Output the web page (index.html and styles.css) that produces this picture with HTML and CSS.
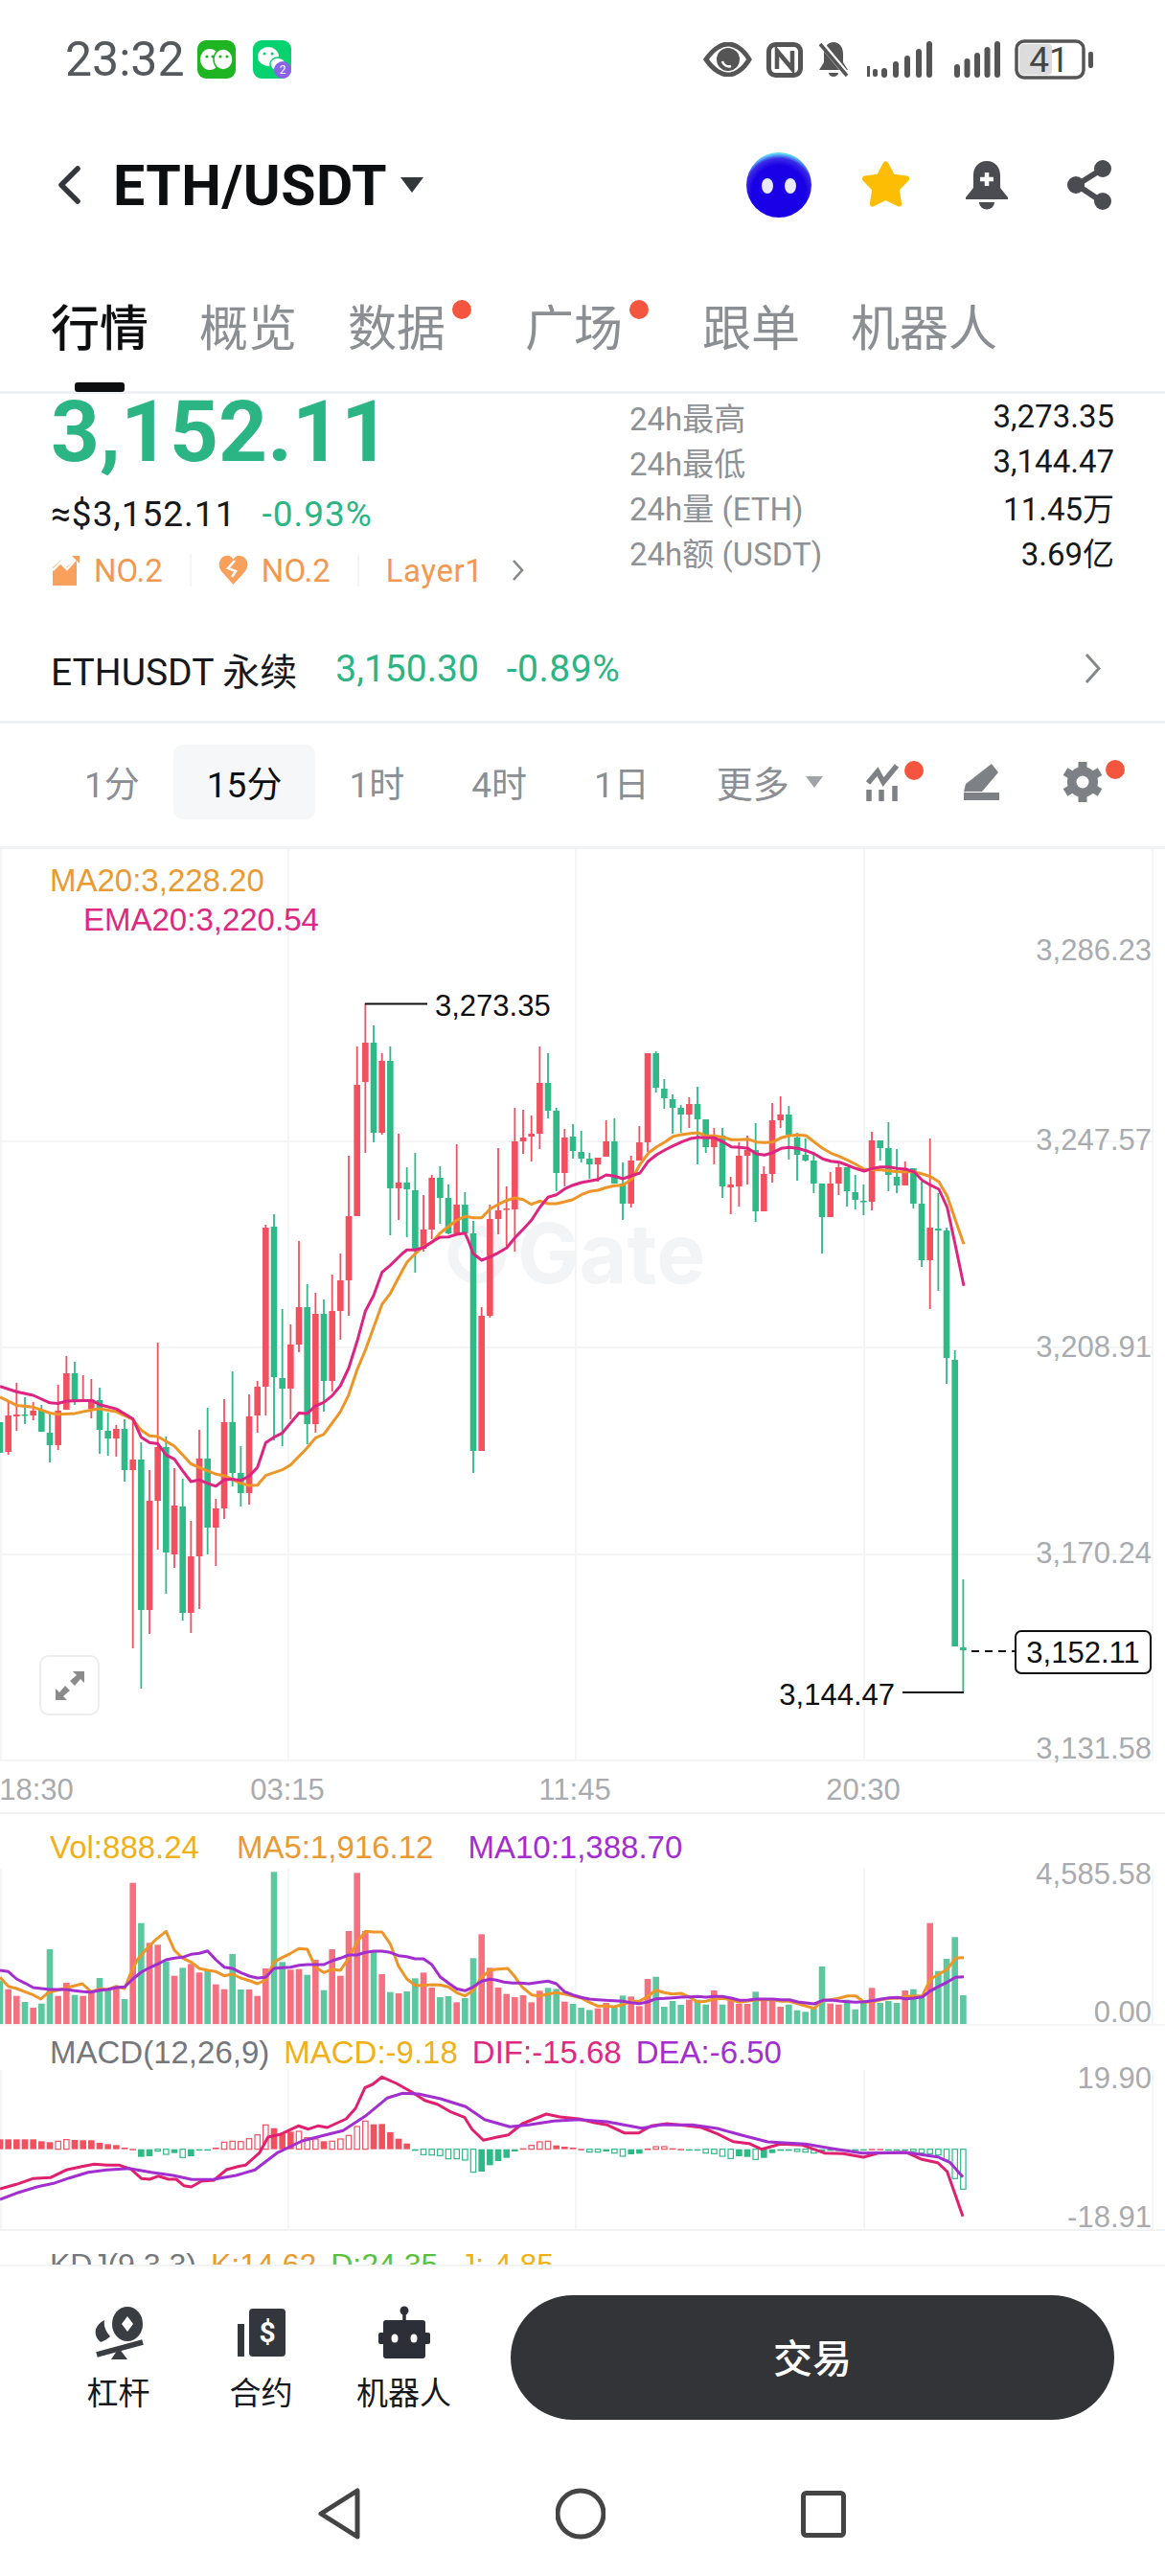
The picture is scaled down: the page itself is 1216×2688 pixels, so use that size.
FILE: index.html
```html
<!DOCTYPE html>
<html lang="zh">
<head>
    <meta charset="UTF-8">
    <meta name="viewport" content="width=device-width, initial-scale=1.0">
    <title>ETH/USDT</title>
    <link rel="stylesheet" href="styles.css">
</head>
<body>
    <div class="status-bar">
        <span class="clock">23:32</span>
        <svg class="app-icon" width="40" height="40" viewBox="0 0 40 40">
            <rect width="40" height="40" rx="9" fill="#1fb522"/>
            <ellipse cx="13" cy="20" rx="10" ry="11" fill="#fff"/>
            <ellipse cx="27" cy="20" rx="10" ry="11" fill="#fff" stroke="#1fb522" stroke-width="1.5"/>
            <circle cx="10" cy="17" r="1.6" fill="#1fb522"/><circle cx="16" cy="17" r="1.6" fill="#1fb522"/>
            <circle cx="24" cy="17" r="1.6" fill="#1fb522"/><circle cx="31" cy="17" r="1.6" fill="#1fb522"/>
        </svg>
        <svg class="app-icon" width="40" height="40" viewBox="0 0 40 40">
            <rect width="40" height="40" rx="9" fill="#06d36f"/>
            <ellipse cx="16" cy="17" rx="11" ry="10" fill="#fff"/>
            <ellipse cx="26" cy="25" rx="8" ry="7" fill="#fff" stroke="#06d36f" stroke-width="1.5"/>
            <circle cx="12" cy="14" r="1.5" fill="#06d36f"/><circle cx="20" cy="14" r="1.5" fill="#06d36f"/>
            <circle cx="31" cy="31" r="9" fill="#8a63e8"/>
            <text x="31" y="35" class="badge-num">2</text>
        </svg>
        <div class="status-right">
            <svg width="51" height="36" viewBox="0 0 51 36">
                <path d="M3 18C11 6 20 2 26 2s15 4 22 16c-7 12-16 16-22 16S11 30 3 18z" fill="none" stroke="#555" stroke-width="5"/>
                <circle cx="26" cy="18" r="12" fill="#555"/>
                <path d="M20 20a7 7 0 0 0 9 5" fill="none" stroke="#fff" stroke-width="2.5"/>
            </svg>
            <svg width="38" height="37" viewBox="0 0 38 37">
                <rect x="2.500" y="2.500" width="33" height="32" rx="7" fill="none" stroke="#555" stroke-width="5"/>
                <path d="M11 28V9l16 19V9" fill="none" stroke="#555" stroke-width="4.500"/>
            </svg>
            <svg class="mute-bell" width="35" height="38" viewBox="0 0 35 38">
                <path d="M17 1c-6 0-10 5-10 12v9l-5 8h30l-5-8v-9c0-7-4-12-10-12z" fill="#555"/>
                <path d="M12 33a5 4 0 0 0 10 0z" fill="#555"/>
                <path d="M3 1l29 35" stroke="#fff" stroke-width="6"/>
                <path d="M3 3l28 33" stroke="#555" stroke-width="3.5"/>
            </svg>
            <svg width="69" height="38" viewBox="0 0 69 38">
                <rect x="1" y="26" width="3" height="11" fill="#555"/><rect x="7" y="29" width="5" height="8" rx="2" fill="#555"/>
                <rect x="16" y="28" width="6" height="10" rx="3" fill="#555"/><rect x="28" y="21" width="6" height="17" rx="3" fill="#555"/>
                <rect x="40" y="15" width="6" height="23" rx="3" fill="#555"/><rect x="52" y="8" width="6" height="30" rx="3" fill="#555"/>
                <rect x="63" y="0" width="6" height="38" rx="3" fill="#555"/>
            </svg>
            <svg class="signal-b" width="48" height="38" viewBox="0 0 48 38">
                <rect x="0" y="24" width="6" height="14" rx="3" fill="#555"/><rect x="10.5" y="18" width="6" height="20" rx="3" fill="#555"/>
                <rect x="21" y="12" width="6" height="26" rx="3" fill="#555"/><rect x="31.5" y="6" width="6" height="32" rx="3" fill="#555"/>
                <rect x="42" y="0" width="6" height="38" rx="3" fill="#555"/>
            </svg>
            <svg width="82" height="42" viewBox="0 0 82 42">
                <rect x="5" y="5" width="34" height="32" rx="4" fill="#dcdcdc"/>
                <rect x="2" y="2" width="70" height="38" rx="8" fill="none" stroke="#555" stroke-width="3.5"/>
                <rect x="77" y="13" width="5" height="17" rx="2" fill="#555"/>
                <text x="36" y="34" class="battery-num">41</text>
            </svg>
        </div>
    </div>

    <div class="head">
        <svg class="back" width="25" height="40" viewBox="0 0 25 40">
            <path d="M22 3L5 20l17 17" fill="none" stroke="#33363b" stroke-width="5.5" stroke-linecap="round" stroke-linejoin="round"/>
        </svg>
        <span class="pair">ETH/USDT</span>
        <span class="pair-caret"></span>
        <div class="head-icons">
            <svg class="mascot" width="68" height="70" viewBox="0 0 68 70">
                <defs>
                    <radialGradient id="blob" cx="50%" cy="62%" r="60%">
                        <stop offset="70%" stop-color="#1a00e6"/><stop offset="88%" stop-color="#3b2be8"/><stop offset="100%" stop-color="#5fd4f5"/>
                    </radialGradient>
                </defs>
                <circle cx="34" cy="35" r="34" fill="url(#blob)"/>
                <ellipse cx="22" cy="36" rx="6" ry="8" fill="#e8e8ff"/><ellipse cx="46" cy="36" rx="6" ry="8" fill="#e8e8ff"/>
            </svg>
            <svg class="fav" width="55" height="52" viewBox="0 0 56 52">
                <polygon points="28,4 35,17.3 50,19.3 39.4,30.7 42,46 28,39 14,46 16.6,30.7 6,19.3 21,17.3" fill="#fcbd04" stroke="#fcbd04" stroke-width="6" stroke-linejoin="round"/>
            </svg>
            <svg class="alert" width="48" height="52" viewBox="0 0 48 52">
                <path d="M24 1C15 1 10 8 10 16v13L2 39v2h44v-2l-8-10V16C38 8 33 1 24 1z" fill="#4a4c52"/>
                <path d="M16 44a8 7.5 0 0 0 16 0z" fill="#4a4c52"/>
                <path d="M24 13v14M17 20h14" stroke="#fff" stroke-width="4.5"/>
            </svg>
            <svg width="50" height="52" viewBox="0 0 50 52">
                <path d="M39 9L12 26l27 18" fill="none" stroke="#4a4c52" stroke-width="6"/>
                <circle cx="39" cy="9" r="9" fill="#4a4c52"/><circle cx="11" cy="26" r="9" fill="#4a4c52"/><circle cx="39" cy="43" r="9" fill="#4a4c52"/>
            </svg>
        </div>
    </div>

    <div class="tabs">
        <div class="tab active">行情<i class="tab-bar"></i></div>
        <div class="tab">概览</div>
        <div class="tab dotted">数据<i class="red-dot"></i></div>
        <div class="tab dotted">广场<i class="red-dot"></i></div>
        <div class="tab">跟单</div>
        <div class="tab">机器人</div>
    </div>

    <div class="ticker">
        <div class="price-col">
            <div class="price">3,152.11</div>
            <div class="price-sub"><span>≈$3,152.11</span><span class="up">-0.93%</span></div>
            <div class="tags">
                <svg width="30" height="32" viewBox="0 0 30 32">
                    <path d="M1 32V13l8-7 6 7 11-9v28z" fill="#f8a05c"/>
                    <path d="M1 16l8-8 7 7 10-11" fill="none" stroke="#fff" stroke-width="2.5"/>
                    <path d="M21 1h8v8z" fill="#f8a05c"/>
                </svg>
                <span class="tag-text">NO.2</span>
                <i class="tag-sep"></i>
                <svg width="31" height="32" viewBox="0 0 31 32">
                    <path d="M15.500 31L3 17C-3 8 4-1 11 1c2 .5 3.500 2 4.500 4C17 2 19 .5 21 1c7-1 13 8 7 16z" fill="#f8a05c"/>
                    <path d="M17 6l-7 8 8 3-4 6" fill="none" stroke="#fff" stroke-width="2.500"/>
                </svg>
                <span class="tag-text">NO.2</span>
                <i class="tag-sep"></i>
                <span class="tag-text layer">Layer1</span>
                <svg class="tag-more" width="13" height="24" viewBox="0 0 13 24">
                    <path d="M2 2l9 10-9 10" fill="none" stroke="#83878c" stroke-width="2.600"/>
                </svg>
            </div>
        </div>
        <div class="stats">
            <div class="stat"><span>24h最高</span><b>3,273.35</b></div>
            <div class="stat"><span>24h最低</span><b>3,144.47</b></div>
            <div class="stat"><span>24h量 (ETH)</span><b>11.45万</b></div>
            <div class="stat"><span>24h额 (USDT)</span><b>3.69亿</b></div>
        </div>
    </div>

    <div class="perp">
        <span class="perp-name">ETHUSDT 永续</span>
        <span class="up perp-price">3,150.30</span>
        <span class="up perp-pct">-0.89%</span>
        <svg class="perp-more" width="18" height="33" viewBox="0 0 18 33">
            <path d="M2 2l13 14.500L2 31" fill="none" stroke="#83878c" stroke-width="3"/>
        </svg>
    </div>

    <div class="intervals">
        <span class="iv">1分</span>
        <span class="iv on">15分</span>
        <span class="iv">1时</span>
        <span class="iv">4时</span>
        <span class="iv">1日</span>
        <span class="iv iv-more">更多<i class="more-caret"></i></span>
        <div class="iv-icons">
            <div class="iv-icon tools">
                <svg width="43" height="40" viewBox="0 0 43 40">
                    <path d="M3 21l10-12 6 11L33 3" fill="none" stroke="#7d8085" stroke-width="5.500"/>
                    <path d="M4 28v12M17 28v12M31 24v16" stroke="#7d8085" stroke-width="5.500"/>
                </svg>
                <i class="red-dot"></i>
            </div>
            <div class="iv-icon pen">
                <svg width="41" height="38" viewBox="0 0 41 38">
                    <path d="M31 0l7 9-17 20H2l2-8z" fill="#7d8085"/>
                    <path d="M2 30h37v8H2z" fill="#7d8085"/>
                </svg>
            </div>
            <div class="iv-icon gear">
                <svg width="40" height="42" viewBox="0 0 40 42">
                    <circle cx="20" cy="21" r="16" fill="#7d8085"/>
                    <path d="M20 0v10M20 32v10M2 10l8 5M30 27l8 5M2 32l8-5M30 15l8-5" stroke="#7d8085" stroke-width="9"/>
                    <circle cx="20" cy="21" r="6.500" fill="#fff"/>
                </svg>
                <i class="red-dot"></i>
            </div>
        </div>
    </div>

    <div class="panel panel-main">
        <svg id="main-chart" class="chart" width="1216" height="1006" viewBox="0 886 1216 1006"></svg>
        <div class="legend legend-main">
            <div class="c-ma20">MA20:3,228.20</div>
            <div class="c-ema20 ema-row">EMA20:3,220.54</div>
        </div>
        <button class="expand">
            <svg width="32" height="32" viewBox="0 0 32 32">
                <path d="M31 1H19l4 4-7 6 5 5 6-7 4 4zM1 31h12l-4-4 7-6-5-5-6 7-4-4z" fill="#8b8b8b"/>
            </svg>
        </button>
    </div>

    <div class="panel panel-vol">
        <svg id="vol-chart" class="chart" width="1216" height="221" viewBox="0 1892 1216 221"></svg>
        <div class="legend legend-row legend-vol">
            <span class="c-gold">Vol:888.24</span>
            <span class="c-ma20 vol-ma5">MA5:1,916.12</span>
            <span class="c-purple">MA10:1,388.70</span>
        </div>
    </div>

    <div class="panel panel-macd">
        <svg id="macd-chart" class="chart" width="1216" height="214" viewBox="0 2113 1216 214"></svg>
        <div class="legend legend-row legend-macd">
            <span class="c-gray">MACD(12,26,9)</span>
            <span class="c-gold">MACD:-9.18</span>
            <span class="c-ema20">DIF:-15.68</span>
            <span class="c-purple">DEA:-6.50</span>
        </div>
    </div>

    <div class="panel panel-kdj">
        <div class="legend legend-row legend-kdj">
            <span class="c-gray">KDJ(9,3,3)</span>
            <span class="c-ma20">K:14.62</span>
            <span class="c-green">D:24.35</span>
            <span class="c-gold kdj-j">J:-4.85</span>
        </div>
    </div>

    <div class="actions">
        <div class="action">
            <svg width="54" height="58" viewBox="0 0 54 58">
                <ellipse cx="36" cy="21" rx="16" ry="18" fill="#3a3d42"/>
                <path d="M36 13l6 8-6 8-6-8z" fill="#fff"/>
                <path d="M12 17C2 22-1 32 8 40c3-1 7-3 10-6C13 28 11 23 12 17z" fill="#3a3d42"/>
                <path d="M4 53l48-13" stroke="#3a3d42" stroke-width="5.500"/>
                <path d="M27 46l9 12H19z" fill="#3a3d42"/>
            </svg>
            <span>杠杆</span>
        </div>
        <div class="action">
            <svg width="50" height="58" viewBox="0 0 50 58">
                <rect x="12" y="5" width="38" height="50" rx="4" fill="#33363c"/>
                <rect x="0" y="21" width="7" height="34" fill="#33363c"/>
                <text x="31" y="40" class="dollar">$</text>
            </svg>
            <span>合约</span>
        </div>
        <div class="action">
            <svg width="54" height="58" viewBox="0 0 54 58">
                <circle cx="27" cy="7" r="4.500" fill="#2c2f38"/>
                <path d="M27 7v12" stroke="#2c2f38" stroke-width="3.500"/>
                <rect x="5" y="17" width="44" height="40" rx="3" fill="#2c2f38"/>
                <rect x="0" y="30" width="54" height="12" rx="2" fill="#2c2f38"/>
                <ellipse cx="17" cy="36" rx="3.500" ry="4.500" fill="#fff"/><ellipse cx="37" cy="36" rx="3.500" ry="4.500" fill="#fff"/>
            </svg>
            <span>机器人</span>
        </div>
        <div class="trade-btn">交易</div>
    </div>

    <div class="sys-nav">
        <svg width="44" height="54" viewBox="0 0 44 54">
            <path d="M41 3v48L3 27z" fill="none" stroke="#444" stroke-width="5" stroke-linejoin="round"/>
        </svg>
        <svg width="52" height="54" viewBox="0 0 52 54">
            <circle cx="26" cy="27" r="24" fill="none" stroke="#444" stroke-width="5"/>
        </svg>
        <svg width="47" height="49" viewBox="0 0 47 49">
            <rect x="2.500" y="2.500" width="42" height="44" rx="3" fill="none" stroke="#444" stroke-width="5"/>
        </svg>
    </div>

    <script src="chart.js"></script>
</body>
</html>
```

FILE: styles.css
```css
* {
    box-sizing: border-box;
}

body {
    margin: 0;
    width: 1216px;
    height: 2688px;
    overflow: hidden;
    background: #fff;
    color: #16181b;
    font-family: 'Roboto', 'Noto Sans CJK SC', sans-serif;
}

i {
    font-style: normal;
}

.up {
    color: #2bb584;
}

/* status bar */
.status-bar {
    display: flex;
    align-items: center;
    height: 124px;
    padding: 0 75px 0 68px;
}

.clock {
    font-size: 50px;
    color: #55585c;
    width: 138px;
}

.app-icon {
    margin-right: 18px;
}

.badge-num {
    font-size: 12px;
    fill: #fff;
    text-anchor: middle;
}

.status-right {
    display: flex;
    align-items: center;
    gap: 15px;
    margin-left: auto;
}

.mute-bell {
    margin-right: 1px;
}

.signal-b {
    margin-left: 8px;
}

.battery-num {
    font-size: 37px;
    fill: #444;
    text-anchor: middle;
}

/* header */
.head {
    display: flex;
    align-items: center;
    height: 138px;
    padding: 0 54px 0 59px;
}

.back {
    margin-right: 34px;
}

.pair {
    font-size: 59px;
    letter-spacing: 0.5px;
    font-weight: 700;
    color: #0d0e10;
}

.pair-caret {
    width: 0;
    height: 0;
    margin-left: 14px;
    border-left: 12px solid transparent;
    border-right: 12px solid transparent;
    border-top: 16px solid #33363b;
}

.head-icons {
    display: flex;
    align-items: center;
    margin-left: auto;
}

.mascot {
    margin-right: 50px;
}

.fav {
    margin-right: 54px;
}

.alert {
    margin-right: 58px;
}

/* tabs */
.tabs {
    display: flex;
    height: 149px;
    padding: 52px 0 0 53px;
    gap: 53px;
    border-bottom: 3px solid #f0f1f2;
}

.tab {
    position: relative;
    height: 94px;
    font-size: 51px;
    line-height: 60px;
    color: #8b8e92;
}

.tab.active {
    color: #0d0e10;
    font-weight: 500;
}

.tab.dotted {
    margin-right: 30px;
}

.tab-bar {
    position: absolute;
    left: 25px;
    bottom: -1px;
    width: 52px;
    height: 10px;
    border-radius: 3px;
    background: #0d0e10;
}

.red-dot {
    position: absolute;
    top: -1px;
    right: -27px;
    width: 20px;
    height: 20px;
    border-radius: 50%;
    background: #f4553f;
}

/* price block */
.ticker {
    display: flex;
    height: 237px;
    padding: 0 53px 0 53px;
}

.price-col {
    width: 604px;
}

.price {
    font-size: 89px;
    line-height: 80px;
    font-weight: 700;
    color: #2bb584;
}

.price-sub {
    display: flex;
    gap: 27px;
    margin-top: 26px;
    font-size: 37px;
    letter-spacing: 1px;
    line-height: 40px;
}

.tags {
    display: flex;
    align-items: center;
    margin-top: 18px;
    height: 40px;
    padding-left: 1px;
}

.tag-text {
    margin-left: 14px;
    font-size: 33px;
    color: #f5984f;
}

.tag-sep {
    width: 2px;
    height: 34px;
    margin: 0 28px;
    background: #f5f5f5;
}

.tag-sep + .layer {
    margin-left: 0;
    letter-spacing: 0.6px;
}

.tag-more {
    margin-left: 30px;
}

.stats {
    flex: 1;
}

.stat {
    display: flex;
    justify-content: space-between;
    align-items: center;
    height: 47px;
    font-size: 33px;
    color: #8e9297;
}

.stat b {
    font-weight: 400;
    font-size: 33px;
    color: #16181b;
}

/* perpetual row */
.perp {
    display: flex;
    align-items: center;
    height: 107px;
    padding: 0 66px 5px 53px;
    font-size: 39px;
    border-bottom: 3px solid #f0f1f2;
}

.perp-price {
    margin: 0 29px 0 40px;
}

.perp-pct {
    letter-spacing: 0.5px;
}

.perp-more {
    margin-left: auto;
}

/* interval row */
.intervals {
    display: flex;
    align-items: center;
    height: 131px;
    padding: 0 66px 7px 53px;
    font-size: 37px;
    color: #8b8e92;
    border-bottom: 3px solid #f0f1f2;
}

.iv {
    display: flex;
    align-items: center;
    height: 78px;
    padding: 0 35px;
    border-radius: 10px;
}

.iv.on {
    color: #0d0e10;
    background: #f5f7f8;
}

.more-caret {
    width: 0;
    height: 0;
    margin-left: 17px;
    border-left: 9px solid transparent;
    border-right: 9px solid transparent;
    border-top: 12px solid #a0a3a7;
}

.iv-more {
    padding-right: 0;
    font-size: 38px;
}

.iv-icons {
    display: flex;
    align-items: center;
    margin-left: auto;
}

.iv-icon {
    position: relative;
    display: flex;
}

.iv-icon.tools {
    margin-right: 58px;
}

.iv-icon.pen {
    margin-right: 65px;
}

.iv-icon .red-dot {
    top: -2px;
    right: -24px;
}

.iv-icon.tools .red-dot {
    right: -18px;
}

/* chart panels */
.panel {
    position: relative;
    font-family: 'Liberation Sans', 'Noto Sans CJK SC', sans-serif;
}

.panel-main {
    height: 1006px;
}

.panel-vol {
    height: 221px;
}

.panel-macd {
    height: 214px;
}

.panel-kdj {
    height: 36px;
    overflow: hidden;
}

.chart {
    display: block;
    overflow: visible;
}

.legend {
    position: absolute;
    left: 52px;
    font-size: 33px;
    line-height: 41px;
}

.legend-row {
    display: flex;
    line-height: 40px;
    gap: 15px;
}

.legend-main {
    top: 12px;
}

.ema-row {
    margin-left: 35px;
}

.legend-vol {
    top: 16px;
    gap: 36px;
}

.vol-ma5 {
    margin-left: 3px;
}

.legend-macd {
    top: 9px;
}

.legend-kdj {
    top: 16px;
    font-size: 32px;
}

.kdj-j {
    margin-left: 8px;
}

.c-ma20 { color: #ea9a32; }
.c-ema20 { color: #dc2a80; }
.c-gold { color: #efb117; }
.c-purple { color: #a32ed0; }
.c-gray { color: #74777b; }
.c-green { color: #58c23c; }

.expand {
    position: absolute;
    left: 41px;
    top: 841px;
    display: flex;
    align-items: center;
    justify-content: center;
    width: 63px;
    height: 63px;
    padding: 0;
    background: #fff;
    border: 2px solid #ecedee;
    border-radius: 10px;
}

.axis {
    font-family: 'Liberation Sans', sans-serif;
    font-size: 31px;
    fill: #a9abae;
}

.axis-dark {
    fill: #0d0e10;
}

.watermark {
    font-family: 'Inter', sans-serif;
    font-size: 86px;
    font-weight: 700;
    fill: #f2f4f5;
}

/* bottom actions */
.actions {
    position: relative;
    display: flex;
    height: 197px;
    padding: 30px 0 0 49px;
    background: #fff;
    border-top: 2px solid #f2f3f4;
}

.action {
    display: flex;
    flex-direction: column;
    align-items: center;
    width: 149px;
    padding-top: 9px;
    font-size: 33px;
    color: #16181b;
}

.action span {
    margin-top: 14px;
    line-height: 44px;
}

.dollar {
    font-family: 'Roboto', sans-serif;
    font-size: 30px;
    font-weight: 700;
    fill: #fff;
    text-anchor: middle;
}

.trade-btn {
    display: flex;
    align-items: center;
    justify-content: center;
    width: 630px;
    height: 130px;
    margin-left: 37px;
    padding-bottom: 4px;
    border-radius: 65px;
    background: #323438;
    color: #fff;
    font-size: 41px;
    font-weight: 500;
}

.sys-nav {
    display: flex;
    align-items: center;
    gap: 204px;
    height: 128px;
    padding: 0 0 2px 332px;
}
```

FILE: chart.js
```js
const RED = "#f2505f";
const GREEN = "#2fb986";
const VOL_RED = "#f5717f";
const VOL_GREEN = "#5dc79f";
const STEP = 8.667;

// wick top, body top, body bottom, wick bottom, colour (page pixels)
const candles = [
    [1484,1484,1516,1516,"g"],[1463,1477,1515,1518,"r"],[1443,1476,1478,1493,"r"],[1458,1476,1477,1486,"g"],
    [1463,1472,1477,1482,"r"],[1466,1472,1494,1494,"g"],[1476,1495,1508,1526,"g"],[1445,1472,1508,1513,"r"],
    [1415,1433,1471,1471,"r"],[1421,1433,1461,1466,"g"],[1435,1461,1463,1463,"r"],[1439,1461,1470,1480,"r"],
    [1448,1461,1492,1517,"g"],[1474,1493,1501,1519,"g"],[1487,1491,1501,1520,"r"],[1481,1491,1534,1546,"g"],
    [1479,1523,1534,1720,"r"],[1505,1523,1680,1762,"g"],[1534,1566,1680,1705,"r"],[1401,1510,1566,1617,"r"],
    [1499,1510,1620,1663,"g"],[1532,1571,1622,1636,"r"],[1543,1572,1683,1691,"g"],[1587,1624,1683,1704,"r"],
    [1492,1522,1624,1679,"r"],[1469,1522,1594,1622,"g"],[1564,1574,1594,1634,"r"],[1460,1484,1574,1585,"r"],
    [1431,1484,1537,1551,"g"],[1509,1537,1558,1572,"g"],[1455,1478,1558,1570,"r"],[1441,1447,1477,1495,"r"],
    [1278,1281,1447,1477,"r"],[1267,1280,1437,1503,"g"],[1366,1438,1449,1509,"g"],[1382,1403,1449,1481,"r"],
    [1295,1364,1403,1411,"r"],[1340,1364,1486,1507,"g"],[1349,1371,1486,1495,"r"],[1356,1371,1441,1473,"g"],
    [1330,1368,1441,1452,"r"],[1308,1336,1368,1398,"r"],[1206,1269,1336,1373,"r"],[1092,1132,1269,1269,"r"],
    [1047,1088,1129,1203,"r"],[1070,1088,1182,1192,"g"],[1099,1107,1182,1184,"r"],[1092,1107,1240,1289,"g"],
    [1183,1234,1240,1273,"r"],[1218,1234,1241,1291,"g"],[1203,1242,1303,1328,"g"],[1247,1283,1303,1306,"r"],
    [1226,1229,1283,1293,"r"],[1217,1229,1250,1277,"g"],[1236,1250,1287,1288,"g"],[1194,1257,1287,1287,"r"],
    [1244,1257,1287,1287,"g"],[1274,1287,1514,1537,"g"],[1364,1373,1514,1514,"r"],[1257,1272,1373,1375,"r"],
    [1198,1263,1272,1288,"r"],[1238,1261,1262,1300,"r"],[1156,1191,1262,1306,"r"],[1158,1187,1191,1204,"r"],
    [1164,1183,1186,1212,"r"],[1092,1130,1183,1199,"r"],[1099,1130,1159,1167,"g"],[1156,1159,1224,1243,"g"],
    [1178,1187,1224,1238,"r"],[1173,1186,1201,1209,"g"],[1180,1202,1209,1213,"g"],[1203,1209,1215,1230,"g"],
    [1208,1208,1215,1233,"r"],[1169,1191,1207,1207,"r"],[1167,1191,1235,1235,"g"],[1213,1235,1256,1273,"g"],
    [1206,1211,1256,1260,"r"],[1175,1192,1211,1211,"r"],[1099,1099,1192,1202,"r"],[1097,1099,1135,1140,"g"],
    [1126,1136,1146,1157,"g"],[1142,1147,1156,1183,"g"],[1153,1156,1163,1182,"g"],[1145,1152,1163,1177,"r"],
    [1134,1152,1168,1215,"g"],[1168,1168,1197,1203,"g"],[1177,1185,1197,1215,"r"],[1177,1185,1238,1250,"g"],
    [1228,1236,1239,1267,"r"],[1192,1206,1238,1259,"r"],[1185,1200,1206,1236,"r"],[1172,1200,1264,1275,"g"],
    [1217,1225,1264,1264,"r"],[1151,1169,1225,1234,"r"],[1144,1163,1169,1177,"r"],[1154,1163,1184,1210,"g"],
    [1182,1187,1205,1232,"g"],[1188,1205,1211,1212,"g"],[1205,1211,1235,1245,"g"],[1235,1235,1270,1308,"g"],
    [1223,1235,1270,1270,"r"],[1212,1218,1235,1247,"r"],[1218,1218,1243,1259,"g"],[1226,1244,1252,1262,"g"],
    [1236,1253,1254,1268,"g"],[1181,1190,1254,1263,"r"],[1190,1190,1198,1211,"g"],[1171,1198,1226,1243,"g"],
    [1199,1228,1237,1245,"g"],[1212,1219,1237,1237,"r"],[1219,1219,1256,1261,"g"],[1233,1256,1315,1322,"g"],
    [1188,1281,1315,1366,"r"],[1245,1282,1284,1347,"g"],[1281,1284,1417,1444,"g"],[1409,1419,1718,1718,"g"],
    [1648,1719,1722,1766,"g"]
];

// volume bar tops, page y = 1930 + v / 3
const volume = [410,437,458,477,495,482,312,458,417,455,458,445,402,440,432,468,104,230,292,298,
    350,395,370,358,385,380,422,437,327,438,438,458,372,70,352,376,374,392,345,440,312,395,255,73,255,320,
    390,446,450,444,403,385,432,462,459,478,465,340,265,370,432,452,462,456,478,442,433,436,476,483,495,502,
    497,480,495,457,460,490,405,398,492,474,486,470,470,485,441,485,470,483,483,445,470,470,492,485,503,508,
    497,366,482,485,470,500,480,433,480,474,480,441,437,460,230,380,342,274,456];

// macd bar ends, page y = 2130 + v / 3; zero line sits at 338
const macd = [307,307,307,307,307,313,316,313,308,309,310,310,318,322,325,333,337,362,360,344,354,350,364,360,342,339,
    333,316,313,314,305,293,262,272,290,283,282,302,306,313,313,306,295,267,250,260,259,285,305,320,343,355,356,358,368,
    368,372,410,408,388,375,365,345,335,326,315,313,326,330,333,337,347,347,345,350,360,354,352,336,330,330,335,337,338,
    339,350,352,360,367,360,362,370,365,350,343,343,345,347,350,346,343,342,341,340,339,337,337,338,338,339,345,350,352,
    356,372,430,463];
const hollow = [7,8,19,20,22,27,28,29,30,31,32,36,37,38,40,41,42,43,44,51,52,53,54,55,56,57,64,65,66,71,72,74,75,79,80,
    85,86,87,88,91,96,97,98,101,110,111,112,113,114,115,116];

// line points were read in three crops of the chart, each with its own origin
const z7 = (p) => [p[0] / 3, 1200 + p[1] * 0.37];
const z8 = (p) => [340 + p[0] / 3, 1060 + p[1] / 3];
const z9 = (p) => [660 + p[0] / 3, 1080 + p[1] / 3];
const v10 = (p) => [p[0] / 3, 1930 + p[1] / 3];
const v11 = (p) => [500 + p[0] / 3, 1930 + p[1] / 3];
const m12 = (p) => [p[0] / 1.5224, 2130 + p[1] / 3];

const ema20 = [
    ...[[0,667],[52,682],[104,692],[156,713],[182,715],[208,708],[260,707],[290,707],[312,718],[364,730],[416,758],[442,810],[468,825],[494,828],[520,860],[546,872],[572,905],[598,935],[624,930],[650,940],[676,948],[702,930],[728,928],[754,932],[780,920],[806,895],[832,826],[858,810],[884,798],[910,770],[936,742],[962,743],[988,722],[1014,712],[1040,693],[1066,665],[1092,615],[1118,540],[1144,455],[1170,410],[1196,345],[1222,325],[1260,292]].map(z7),
    ...[[254,733],[280,733],[306,725],[332,708],[358,693],[384,692],[410,684],[436,680],[445,700],[462,745],[488,765],[514,755],[540,742],[566,727],[592,695],[618,668],[644,640],[670,600],[696,568],[722,560],[748,542],[774,530],[800,522],[852,512],[878,498],[904,502],[930,510]].map(z8),
    ...[[0,440],[24,432],[50,395],[76,375],[102,360],[128,347],[154,335],[180,325],[206,320],[232,322],[258,322],[284,335],[310,350],[336,352],[362,355],[388,372],[414,376],[440,368],[466,355],[492,352],[518,355],[544,362],[570,372],[596,388],[622,395],[648,398],[674,408],[700,418],[726,426],[752,418],[778,413],[804,413],[830,418],[856,420],[882,428],[908,455],[934,470],[960,483],[986,540],[1012,660],[1038,785]].map(z9)
];

const ma20 = [
    ...[[0,697],[52,720],[104,725],[156,742],[182,745],[234,743],[286,733],[312,730],[364,738],[416,760],[442,790],[468,806],[494,808],[546,835],[572,860],[598,885],[650,905],[676,914],[702,918],[754,940],[780,946],[806,945],[832,918],[884,902],[910,888],[962,840],[988,812],[1014,802],[1040,770],[1066,738],[1092,690],[1118,620],[1144,565],[1170,500],[1196,435],[1222,405],[1260,340]].map(z7),
    ...[[254,772],[280,745],[306,722],[332,710],[358,680],[384,660],[410,640],[436,628],[462,632],[488,632],[514,605],[540,590],[566,578],[592,570],[618,575],[644,590],[670,580],[696,588],[722,588],[748,582],[774,575],[800,560],[826,550],[852,546],[878,538],[904,532],[930,530]].map(z8),
    ...[[0,450],[24,405],[50,370],[76,350],[102,335],[128,317],[154,312],[180,308],[206,306],[232,316],[258,316],[284,320],[310,328],[336,328],[362,326],[388,335],[414,337],[440,335],[466,322],[492,315],[518,313],[544,315],[570,335],[596,355],[622,370],[648,380],[674,392],[700,405],[726,420],[752,422],[778,422],[804,425],[830,428],[856,428],[882,428],[908,435],[934,443],[960,460],[986,505],[1012,580],[1038,655]].map(z9)
];

const volMa5 = [
    ...[[0,400],[26,428],[52,435],[78,445],[104,455],[128,468],[150,448],[180,440],[220,430],[258,420],[285,445],[312,436],[338,438],[364,428],[390,435],[408,390],[430,345],[460,310],[490,280],[520,256],[546,315],[572,340],[598,352],[624,372],[650,378],[676,382],[702,395],[728,390],[754,402],[780,410],[806,420],[832,408],[858,352],[884,338],[910,325],[936,310],[962,312],[988,368],[1014,385],[1040,375],[1066,378],[1092,340],[1118,290],[1144,256],[1170,258],[1196,258],[1222,295],[1248,365],[1274,405],[1300,425],[1326,425],[1352,423],[1378,424],[1404,430],[1430,448],[1456,458],[1482,440],[1508,400],[1534,378]].map(v10),
    ...[[52,375],[90,372],[110,395],[135,430],[165,455],[190,458],[216,452],[242,448],[268,452],[294,458],[320,465],[346,478],[372,490],[398,490],[424,492],[450,485],[476,475],[502,475],[528,460],[554,440],[580,448],[606,452],[632,450],[660,462],[684,477],[710,475],[736,468],[762,466],[790,470],[816,478],[842,474],[868,470],[920,470],[946,475],[972,475],[998,482],[1024,490],[1050,497],[1076,472],[1102,470],[1128,465],[1154,458],[1180,458],[1206,478],[1232,476],[1258,470],[1284,466],[1310,466],[1336,460],[1362,458],[1388,458],[1414,405],[1440,390],[1466,375],[1492,340],[1518,338]].map(v11)
];

const volMa10 = [
    ...[[0,378],[26,382],[52,405],[78,418],[104,432],[130,435],[156,438],[182,438],[208,438],[234,442],[260,445],[286,446],[312,440],[338,438],[364,432],[390,430],[416,405],[442,384],[468,370],[494,358],[520,345],[546,340],[572,337],[598,328],[624,325],[650,317],[676,345],[702,368],[728,372],[754,385],[780,396],[806,402],[832,400],[858,372],[884,370],[910,368],[936,362],[962,360],[988,360],[1014,360],[1040,348],[1066,340],[1092,330],[1118,330],[1144,322],[1170,318],[1196,318],[1222,322],[1248,332],[1274,335],[1300,342],[1326,342],[1352,360],[1378,398],[1404,418],[1430,436],[1456,442],[1482,430],[1508,412],[1534,406]].map(v10),
    ...[[52,408],[78,415],[104,418],[130,418],[156,420],[182,416],[216,412],[242,420],[268,445],[294,455],[320,463],[346,468],[372,470],[398,472],[424,473],[450,475],[476,479],[502,482],[528,477],[554,467],[580,466],[606,464],[632,462],[660,461],[684,460],[710,462],[736,460],[762,460],[790,465],[816,472],[842,471],[868,468],[920,468],[946,470],[972,470],[998,477],[1024,480],[1050,483],[1076,472],[1102,471],[1128,474],[1154,476],[1180,478],[1206,476],[1232,473],[1258,468],[1284,464],[1310,463],[1336,467],[1362,465],[1388,461],[1414,442],[1440,428],[1466,415],[1492,400],[1518,398]].map(v11)
];

const dif = [[0,462],[26,448],[52,430],[80,427],[105,403],[130,392],[150,385],[170,388],[190,388],[208,400],[225,430],[238,432],[252,422],[268,432],[280,432],[292,452],[304,456],[320,438],[340,435],[360,402],[378,392],[390,388],[412,350],[426,300],[445,292],[474,265],[490,275],[505,265],[520,270],[550,243],[565,210],[580,145],[592,135],[607,112],[630,132],[655,160],[675,185],[695,197],[715,220],[738,238],[750,275],[768,310],[790,300],[808,293],[830,258],[868,228],[890,237],[920,243],[945,255],[965,262],[992,287],[1015,287],[1035,265],[1060,258],[1090,264],[1115,270],[1140,290],[1165,314],[1190,320],[1210,338],[1240,322],[1275,325],[1310,350],[1340,352],[1372,363],[1395,350],[1440,348],[1465,370],[1490,380],[1505,408],[1530,548]].map(m12);
const dea = [[0,495],[30,473],[60,455],[85,445],[110,428],[140,410],[170,403],[205,398],[240,410],[275,420],[305,433],[340,432],[375,420],[405,403],[440,350],[480,312],[510,297],[545,280],[580,235],[615,178],[640,163],[665,165],[700,180],[740,205],[770,245],[810,268],[840,262],[880,250],[920,245],[965,252],[1020,272],[1050,262],[1100,262],[1140,273],[1180,295],[1220,315],[1280,322],[1320,335],[1370,350],[1440,348],[1490,362],[1510,380],[1530,425]].map(m12);

function rect(x, y, w, h, fill) {
    return `<rect x="${x.toFixed(2)}" y="${y.toFixed(2)}" width="${w}" height="${Math.max(h, 1.5).toFixed(2)}" fill="${fill}"/>`;
}

function line(points, color, width) {
    let d = points.map((p) => p[0].toFixed(1) + "," + p[1].toFixed(1)).join(" ");
    return `<polyline points="${d}" fill="none" stroke="${color}" stroke-width="${width}" stroke-linejoin="round"/>`;
}

function text(x, y, str, anchor, cls) {
    return `<text class="axis ${cls || ""}" x="${x}" y="${y}" text-anchor="${anchor}" dominant-baseline="central">${str}</text>`;
}

function grid(top, bottom, rows) {
    let out = "";
    [1, 301, 601, 902, 1203].forEach((x) => {
        out += `<rect x="${x - 1}" y="${top}" width="2" height="${bottom - top}" fill="#f4f5f6"/>`;
    });
    rows.forEach((y) => {
        out += `<rect x="0" y="${y - 1}" width="1203" height="2" fill="#f3f4f5"/>`;
    });
    return out;
}

function drawMain() {
    let out = grid(886, 1837, [1191, 1406, 1622, 1837]);

    out += `<circle cx="498" cy="1309" r="25" fill="none" stroke="#f2f4f5" stroke-width="11"/>`;
    out += `<text class="watermark" x="540" y="1339">Gate</text>`;

    candles.forEach((c, i) => {
        let x = STEP * i;
        let color = c[4] === "r" ? RED : GREEN;
        out += rect(x - 0.9, c[0], 1.8, c[3] - c[0], color);
        out += rect(x - 3.3, c[1], 6.6, c[2] - c[1], color);
    });

    out += line(ma20, "#ee9527", 3);
    out += line(ema20, "#dd2480", 3);

    [[991, "3,286.23"], [1189, "3,247.57"], [1405, "3,208.91"], [1620, "3,170.24"], [1824, "3,131.58"]].forEach((t) => {
        out += text(1202, t[0], t[1], "end");
    });
    [[38, "18:30"], [300, "03:15"], [600, "11:45"], [901, "20:30"]].forEach((t) => {
        out += text(t[0], 1867, t[1], "middle");
    });

    // high / low markers
    out += rect(381, 1046.5, 65, 2, "#0d0e10");
    out += text(454, 1049, "3,273.35", "start", "axis-dark");
    out += rect(942, 1765, 64, 2, "#0d0e10");
    out += text(934, 1768, "3,144.47", "end", "axis-dark");

    // last price tag
    out += `<path d="M1014 1723H1060" stroke="#0d0e10" stroke-width="2" stroke-dasharray="8 6"/>`;
    out += `<rect x="1060" y="1702" width="141" height="44" rx="6" fill="#fff" stroke="#0d0e10" stroke-width="2"/>`;
    out += text(1130.5, 1724.5, "3,152.11", "middle", "axis-dark");

    out += rect(0, 1891, 1216, 2, "#f0f1f2");
    document.getElementById("main-chart").innerHTML = out;
}

function drawVolume() {
    let out = grid(1950, 2113, []);
    volume.forEach((v, i) => {
        let y = 1930 + v / 3;
        out += rect(STEP * i - 3.3, y, 6.6, 2113 - y, candles[i][4] === "r" ? VOL_RED : VOL_GREEN);
    });
    out += line(volMa5, "#ee9527", 3);
    out += line(volMa10, "#a32ed0", 3);
    out += text(1202, 1955, "4,585.58", "end");
    out += text(1202, 2099, "0.00", "end");
    out += rect(0, 2112, 1216, 2, "#f3f4f5");
    document.getElementById("vol-chart").innerHTML = out;
}

function drawMacd() {
    let out = grid(2160, 2327, []);
    macd.forEach((v, i) => {
        let y = 2130 + v / 3;
        let zero = 2130 + 338 / 3;
        let color = v < 338 ? RED : GREEN;
        let top = Math.min(y, zero);
        let h = Math.abs(y - zero);
        if (hollow.includes(i)) {
            out += `<rect x="${(STEP * i - 2.7).toFixed(2)}" y="${top.toFixed(2)}" width="5.4" height="${h.toFixed(2)}" fill="#fff" stroke="${color}" stroke-width="1.2"/>`;
        } else {
            out += rect(STEP * i - 3.3, top, 6.6, h, color);
        }
    });
    out += line(dif, "#e0206f", 3);
    out += line(dea, "#a32ed0", 3);
    out += text(1202, 2168, "19.90", "end");
    out += text(1202, 2313, "-18.91", "end");
    out += rect(0, 2326, 1216, 2, "#f0f1f2");
    document.getElementById("macd-chart").innerHTML = out;
}

drawMain();
drawVolume();
drawMacd();
```
